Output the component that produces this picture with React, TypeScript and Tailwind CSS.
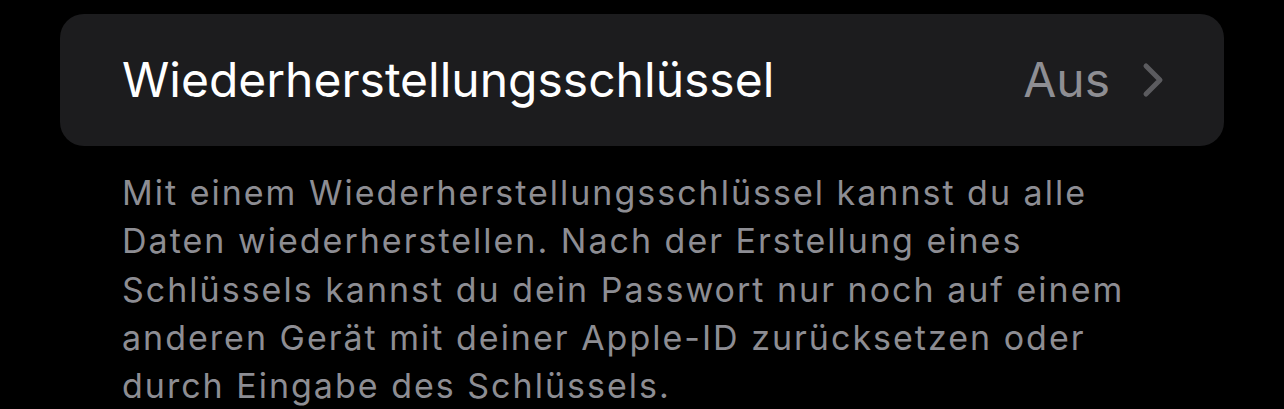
export default function App() {
  const lines = [
    "Mit einem Wiederherstellungsschlüssel kannst du alle",
    "Daten wiederherstellen. Nach der Erstellung eines",
    "Schlüssels kannst du dein Passwort nur noch auf einem",
    "anderen Gerät mit deiner Apple-ID zurücksetzen oder",
    "durch Eingabe des Schlüssels.",
  ];
  return (
    <div className="h-[409px] w-[1284px] overflow-hidden bg-black pt-[14px] font-['Inter',sans-serif]">
      <div className="mx-[60px] flex h-[132px] items-center justify-between rounded-[24px] bg-[#1c1c1e] pl-[62px] pr-[60px]">
        <span className="text-[48px] text-white">Wiederherstellungsschlüssel</span>
        <div className="flex items-center gap-[32px]">
          <span className="text-[48px] text-[#8e8e93]">Aus</span>
          <svg width="22" height="36" viewBox="0 0 22 36" fill="none">
            <path d="M4 4 L18 18 L4 32" stroke="#5b5b5f" strokeWidth="5" strokeLinecap="round" strokeLinejoin="round" />
          </svg>
        </div>
      </div>
      <div className="mt-[23px] pl-[122px] text-[34px] leading-[48.3px] tracking-[2px] text-[#8d8d93]">
        {lines.map((l) => (
          <div key={l} className="whitespace-nowrap">{l}</div>
        ))}
      </div>
    </div>
  );
}
